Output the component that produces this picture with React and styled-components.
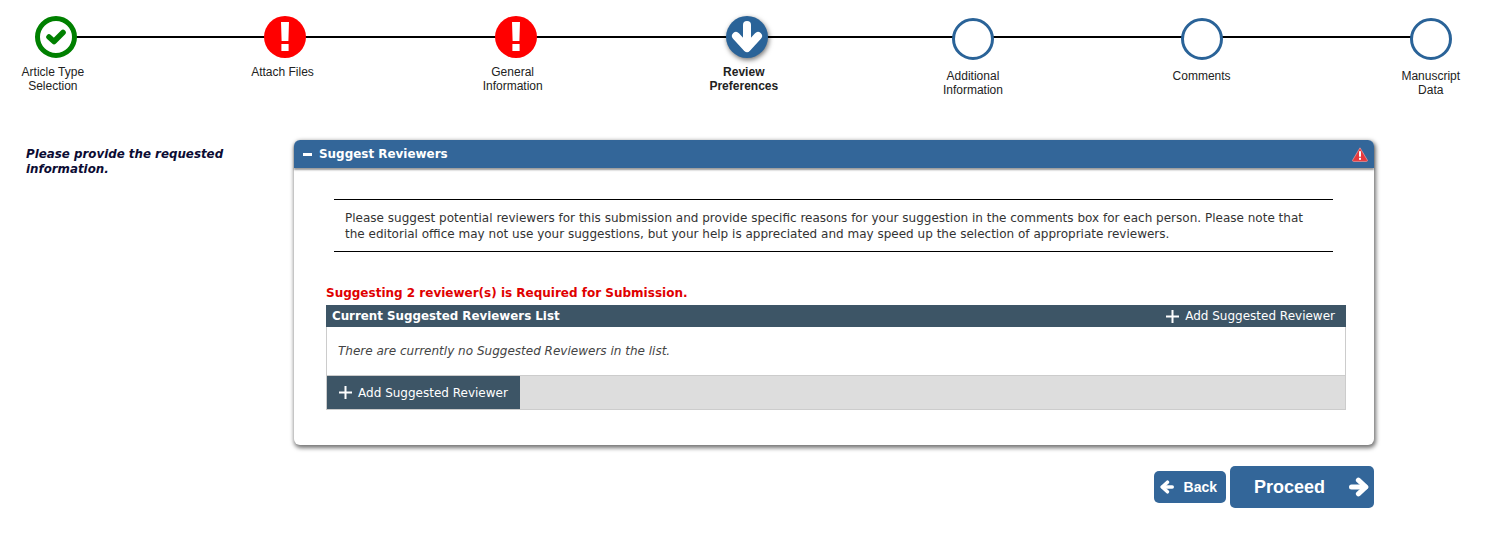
import React from "react";
import styled, { createGlobalStyle } from "styled-components";

const Global = createGlobalStyle`
  html, body { margin: 0; padding: 0; background: #fff; }
  body { font-family: "DejaVu Sans", Verdana, sans-serif; font-size: 12px; width: 1489px; height: 558px; overflow: hidden; }
`;

const Page = styled.div`
  display: flex;
  flex-direction: column;
  width: 1489px;
`;

const Stepper = styled.ol`
  position: relative;
  display: grid;
  grid-template-columns: repeat(7, 229.67px);
  margin: 0 0 0 -62px;
  padding: 16px 0 0;
  height: 140px;
  box-sizing: border-box;
  list-style: none;
`;

const Line = styled.div`
  position: absolute;
  left: 118px;
  width: 1374px;
  top: 36px;
  height: 2px;
  background: #000;
`;

const Step = styled.li`
  position: relative;
  display: flex;
  flex-direction: column;
  align-items: center;
  padding-left: ${(p) => p.$shift || 0}px;
  font: ${(p) => (p.$active ? "bold" : "normal")} 12px/14px "Liberation Sans", Arial, sans-serif;
  color: #222;
  text-align: center;
`;

const Circle = styled.div`
  width: 42px;
  height: 42px;
  box-sizing: border-box;
  border-radius: 50%;
  display: flex;
  align-items: center;
  justify-content: center;
  margin-left: ${(p) => (p.$pending ? 0 : 6)}px;
  margin-top: ${(p) => (p.$pending ? 2 : 0)}px;
  margin-bottom: ${(p) => (p.$pending ? 9 : 7)}px;
  color: #fff;
  background: ${(p) => ({ done: "#fff", error: "#f00", active: "#2a6398", pending: "#fff" }[p.$kind])};
  border: ${(p) => (p.$kind === "done" ? "5px solid #008000" : p.$kind === "pending" ? "3px solid #2a6398" : "0")};
  box-shadow: ${(p) => (p.$kind === "active" ? "1px 2px 5px rgba(0,0,0,.55)" : "none")};
`;

const Main = styled.div`
  display: flex;
  align-items: flex-start;
`;

const Aside = styled.p`
  width: 268px;
  margin: 7px 0 0;
  padding-left: 26px;
  flex: none;
  font: italic bold 11.85px/15px "DejaVu Sans", Verdana, sans-serif;
  color: #0b0b33;
`;

const Column = styled.div`
  width: 1080px;
  display: flex;
  flex-direction: column;
`;

const Panel = styled.section`
  border-radius: 6px;
  background: #fff;
  box-shadow: 1px 2px 4px 1px rgba(0, 0, 0, 0.55);
`;

const PanelHead = styled.header`
  height: 28px;
  box-sizing: border-box;
  background: #336699;
  border-radius: 6px 6px 0 0;
  box-shadow: 0 2px 2px rgba(0, 0, 0, 0.4);
  display: flex;
  align-items: center;
  gap: 7px;
  padding: 0 6px 0 9px;
  color: #fff;
  font-weight: bold;
  font-size: 11.95px;
`;

const PanelTitle = styled.span`
  flex: 1;
`;

const MinusMark = styled.span`
  width: 9px;
  height: 3px;
  background: #fff;
`;

const PanelBody = styled.div`
  padding: 31px 28px 35px 32px;
`;

const Intro = styled.div`
  margin: 0 13px 0 8px;
  padding: 11px 9px 9px 11px;
  border-top: 1px solid #000;
  border-bottom: 1px solid #000;
  color: #333;
  font-size: 12.03px;
  line-height: 15.5px;
`;

const Required = styled.div`
  margin-top: 33px;
  color: #e00000;
  font-weight: bold;
  font-size: 12px;
  line-height: 16px;
`;

const ListHead = styled.div`
  margin-top: 4px;
  height: 22px;
  background: #3d5566;
  color: #fff;
  display: flex;
  align-items: center;
  justify-content: space-between;
  padding: 0 11px 0 6px;
  font-weight: bold;
  font-size: 11.85px;
`;

const AddLabel = styled.span`
  display: inline-flex;
  align-items: center;
  gap: 6px;
  color: #fff;
  font-weight: normal;
  font-size: 12px;
`;

const Empty = styled.div`
  height: 48px;
  box-sizing: border-box;
  display: flex;
  align-items: center;
  padding-left: 11px;
  border: 1px solid #ccc;
  border-top: 0;
  border-bottom: 0;
  font-style: italic;
  font-size: 12.03px;
  color: #444;
`;

const ListFoot = styled.div`
  height: 35px;
  box-sizing: border-box;
  background: #ddd;
  border: 1px solid #ccc;
  display: flex;
`;

const AddButton = styled.div`
  width: 193px;
  background: #3d5566;
  display: flex;
  align-items: center;
  justify-content: center;
`;

const Actions = styled.div`
  display: flex;
  justify-content: flex-end;
  align-items: center;
  gap: 4px;
  margin-top: 21px;
`;

const Button = styled.div`
  display: flex;
  align-items: center;
  justify-content: space-between;
  box-sizing: border-box;
  width: ${(p) => p.$w}px;
  height: ${(p) => p.$h}px;
  padding: ${(p) => p.$pad};
  border-radius: 5px;
  background: #336699;
  color: #fff;
  font: bold ${(p) => p.$size}px "Liberation Sans", Arial, sans-serif;
`;

const WarnIcon = () => (
  <svg width="16" height="15" viewBox="0 0 16 15">
    <path d="M8 .8 L15.4 13.2 Q15.6 14.4 14.4 14.4 H1.6 Q.4 14.4 .6 13.2 Z" fill="#e8383c" stroke="#f2a0a0" strokeWidth=".7" />
    <rect x="7" y="4.2" width="2" height="5.5" fill="#fff" />
    <rect x="7" y="10.8" width="2" height="2" fill="#fff" />
  </svg>
);

const CheckIcon = () => (
  <svg width="20" height="16" viewBox="0 0 20 16">
    <polyline points="3,8 8,12.5 17,3.5" fill="none" stroke="#008000" strokeWidth="5.6" strokeLinejoin="round" strokeLinecap="round" />
  </svg>
);

const BangIcon = () => (
  <svg width="10" height="30" viewBox="0 0 10 30">
    <path d="M1 0 H9 L8.4 19 H1.6 Z" fill="#fff" />
    <rect x="1.4" y="22" width="7.2" height="7" fill="#fff" />
  </svg>
);

const ArrowIcon = ({ size, dir = "right" }) => {
  const rot = { right: 0, down: 90, left: 180 }[dir];
  return (
    <svg width={size} height={size} viewBox="0 0 32 32" style={{ transform: `rotate(${rot}deg)` }}>
      <g fill="none" stroke="#fff" strokeLinecap="round" strokeLinejoin="round" strokeWidth="8">
        <line x1="4" y1="16" x2="26" y2="16" />
        <polyline points="15,5 27,16 15,27" />
      </g>
    </svg>
  );
};

const PlusIcon = () => (
  <svg width="13" height="13" viewBox="0 0 13 13">
    <path d="M5.5 0 H7.5 V5.5 H13 V7.5 H7.5 V13 H5.5 V7.5 H0 V5.5 H5.5 Z" fill="#fff" />
  </svg>
);

const steps = [
  { a: "Article Type", b: "Selection", k: "done", i: <CheckIcon /> },
  { a: "Attach Files", k: "error", i: <BangIcon /> },
  { a: "General", b: "Information", k: "error", i: <BangIcon />, s: 1 },
  { a: "Review", b: "Preferences", k: "active", i: <ArrowIcon size={32} dir="down" />, s: 4 },
  { a: "Additional", b: "Information", k: "pending", s: 3 },
  { a: "Comments", k: "pending", s: 1 },
  { a: "Manuscript", b: "Data", k: "pending" },
];

export default function App() {
  return (
    <Page>
      <Global />
      <Stepper>
        <Line />
        {steps.map((s) => (
          <Step key={s.a} $active={s.k === "active"} $shift={s.s}>
            <Circle $kind={s.k} $pending={s.k === "pending"}>{s.i}</Circle>
            <span>{s.a}</span>
            {s.b && <span>{s.b}</span>}
          </Step>
        ))}
      </Stepper>
      <Main>
        <Aside>Please provide the requested information.</Aside>
        <Column>
          <Panel>
            <PanelHead>
              <MinusMark />
              <PanelTitle>Suggest Reviewers</PanelTitle>
              <WarnIcon />
            </PanelHead>
            <PanelBody>
              <Intro>
                Please suggest potential reviewers for this submission and provide specific reasons for your suggestion in the comments box for each person. Please note that the editorial office may not use your suggestions, but your help is appreciated and may speed up the selection of appropriate reviewers.
              </Intro>
              <Required>Suggesting 2 reviewer(s) is Required for Submission.</Required>
              <ListHead>
                <span>Current Suggested Reviewers List</span>
                <AddLabel><PlusIcon />Add Suggested Reviewer</AddLabel>
              </ListHead>
              <Empty>There are currently no Suggested Reviewers in the list.</Empty>
              <ListFoot>
                <AddButton>
                  <AddLabel><PlusIcon />Add Suggested Reviewer</AddLabel>
                </AddButton>
              </ListFoot>
            </PanelBody>
          </Panel>
          <Actions>
            <Button $w={72} $h={32} $size={14} $pad="0 9px 0 6px"><ArrowIcon size={14} dir="left" />Back</Button>
            <Button $w={144} $h={42} $size={18} $pad="0 5px 0 24px">Proceed<ArrowIcon size={20} /></Button>
          </Actions>
        </Column>
      </Main>
    </Page>
  );
}
